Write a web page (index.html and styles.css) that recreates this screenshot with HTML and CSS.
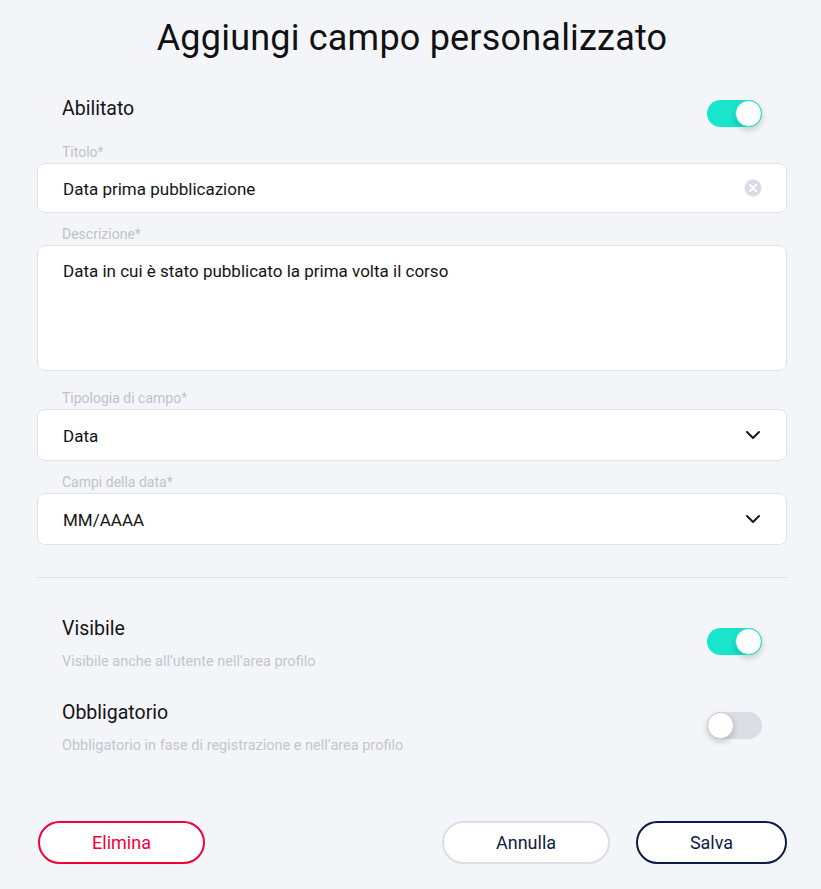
FILE: index.html
```html
<!DOCTYPE html>
<html lang="it">
<head>
<meta charset="utf-8">
<link rel="stylesheet" href="styles.css">
</head>
<body>
<div class="page">
  <h1 class="title">Aggiungi campo personalizzato</h1>

  <div class="setting first">
    <div class="setting-text"><div class="setting-label">Abilitato</div></div>
    <span class="toggle on"><span class="knob"></span></span>
  </div>

  <div class="field f-title">
    <label class="field-label">Titolo*</label>
    <div class="box input">
      <span class="value">Data prima pubblicazione</span>
      <svg class="clear" width="18" height="18" viewBox="0 0 18 18"><circle cx="9" cy="9" r="8.5" fill="#d9dae3"/><path d="M6 6 L12 12 M12 6 L6 12" stroke="#fff" stroke-width="2" stroke-linecap="round"/></svg>
    </div>
  </div>

  <div class="field f-desc">
    <label class="field-label">Descrizione*</label>
    <div class="box textarea">
      <span class="value">Data in cui è stato pubblicato la prima volta il corso</span>
    </div>
  </div>

  <div class="field f-type">
    <label class="field-label">Tipologia di campo*</label>
    <div class="box input select">
      <span class="value">Data</span>
      <svg class="chev" width="16" height="10" viewBox="0 0 16 10"><path d="M2 2 L8 8 L14 2" fill="none" stroke="#1a1a1a" stroke-width="2" stroke-linecap="round" stroke-linejoin="round"/></svg>
    </div>
  </div>

  <div class="field f-date">
    <label class="field-label">Campi della data*</label>
    <div class="box input select">
      <span class="value">MM/AAAA</span>
      <svg class="chev" width="16" height="10" viewBox="0 0 16 10"><path d="M2 2 L8 8 L14 2" fill="none" stroke="#1a1a1a" stroke-width="2" stroke-linecap="round" stroke-linejoin="round"/></svg>
    </div>
  </div>

  <hr class="divider">

  <div class="setting second">
    <div class="setting-text">
      <div class="setting-label">Visibile</div>
      <div class="setting-sub">Visibile anche all’utente nell’area profilo</div>
    </div>
    <span class="toggle on"><span class="knob"></span></span>
  </div>

  <div class="setting third">
    <div class="setting-text">
      <div class="setting-label">Obbligatorio</div>
      <div class="setting-sub">Obbligatorio in fase di registrazione e nell’area profilo</div>
    </div>
    <span class="toggle off"><span class="knob"></span></span>
  </div>

  <div class="actions">
    <button class="btn danger">Elimina</button>
    <div class="right-actions">
      <button class="btn cancel">Annulla</button>
      <button class="btn save">Salva</button>
    </div>
  </div>
</div>
</body>
</html>
```

FILE: styles.css
```css
* { box-sizing: border-box; }
html, body { margin: 0; padding: 0; }
body {
  background: #f4f5f9;
  font-family: Roboto, "Liberation Sans", sans-serif;
  color: #141414;
  width: 821px;
  height: 889px;
  overflow: hidden;
}
.page {
  width: 750px;
  margin-left: 37px;
  padding-top: 16px;
}
.title {
  margin: 0;
  text-align: center;
  font-size: 36px;
  line-height: 44px;
  font-weight: 400;
  color: #111;
  letter-spacing: 0.2px;
}
.setting {
  display: flex;
  align-items: flex-start;
  justify-content: space-between;
  padding: 0 25px;
}
.setting.first { margin-top: 35px; }
.setting.first .toggle { margin-top: 5px; }
.setting.second { margin-top: 37px; }
.setting.third { margin-top: 28px; }
.setting.second .toggle, .setting.third .toggle { margin-top: 13px; }
.setting-label {
  padding-top: 2px;
  font-size: 19.5px;
  line-height: 24px;
  color: #141414;
}
.setting-sub {
  margin-top: 12px;
  font-size: 14.5px;
  line-height: 18px;
  color: #c3c5cc;
}
.toggle {
  position: relative;
  display: block;
  width: 55px;
  height: 27px;
  border-radius: 14px;
  flex: none;
}
.toggle.on { background: #19e5cc; }
.toggle.off { background: #dcdde4; }
.toggle .knob {
  position: absolute;
  top: 0;
  width: 27px;
  height: 27px;
  border-radius: 50%;
  background: #fff;
  box-shadow: 0 3px 6px rgba(0,0,0,0.18);
}
.toggle.on .knob { right: 0; border: 1px solid #19e5cc; }
.toggle.off .knob { left: 0; border: 1px solid #c8c9d0; }
.f-title { margin-top: 16px; }
.f-desc { margin-top: 12px; }
.f-type { margin-top: 18px; }
.f-date { margin-top: 12px; }
.field-label {
  display: block;
  padding-left: 25px;
  padding-top: 1px;
  font-size: 14px;
  line-height: 16px;
  color: #c0c2c9;
  margin-bottom: 3px;
}
.box {
  background: #fff;
  border: 1px solid #e1e3e9;
  border-radius: 8px;
  padding: 0 24px 0 25px;
  font-size: 17px;
  color: #141414;
}
.input {
  height: 50px;
  display: flex;
  align-items: center;
  justify-content: space-between;
}
.input .value { padding-top: 1px; }
.select { height: 52px; }
.textarea {
  height: 126px;
  padding-top: 15px;
  line-height: 20px;
}
.chev { margin-right: 1px; }
.divider {
  margin: 32px 0 0 0;
  border: 0;
  border-top: 1px solid #dcdee4;
}
.actions {
  margin-top: 66px;
  display: flex;
  justify-content: space-between;
  align-items: center;
}
.right-actions { display: flex; gap: 26px; }
.btn {
  height: 43px;
  border-radius: 22px;
  background: #fff;
  font-family: Roboto, "Liberation Sans", sans-serif;
  font-size: 18px;
  border: 2px solid;
  padding: 0;
  cursor: pointer;
}
.danger { width: 167px; border-color: #f2003c; color: #f2003c; margin-left: 1px; }
.cancel { width: 168px; border-color: #dcdde6; color: #0f1a45; }
.save { width: 151px; border-color: #0f1a45; color: #0f1a45; }
```
